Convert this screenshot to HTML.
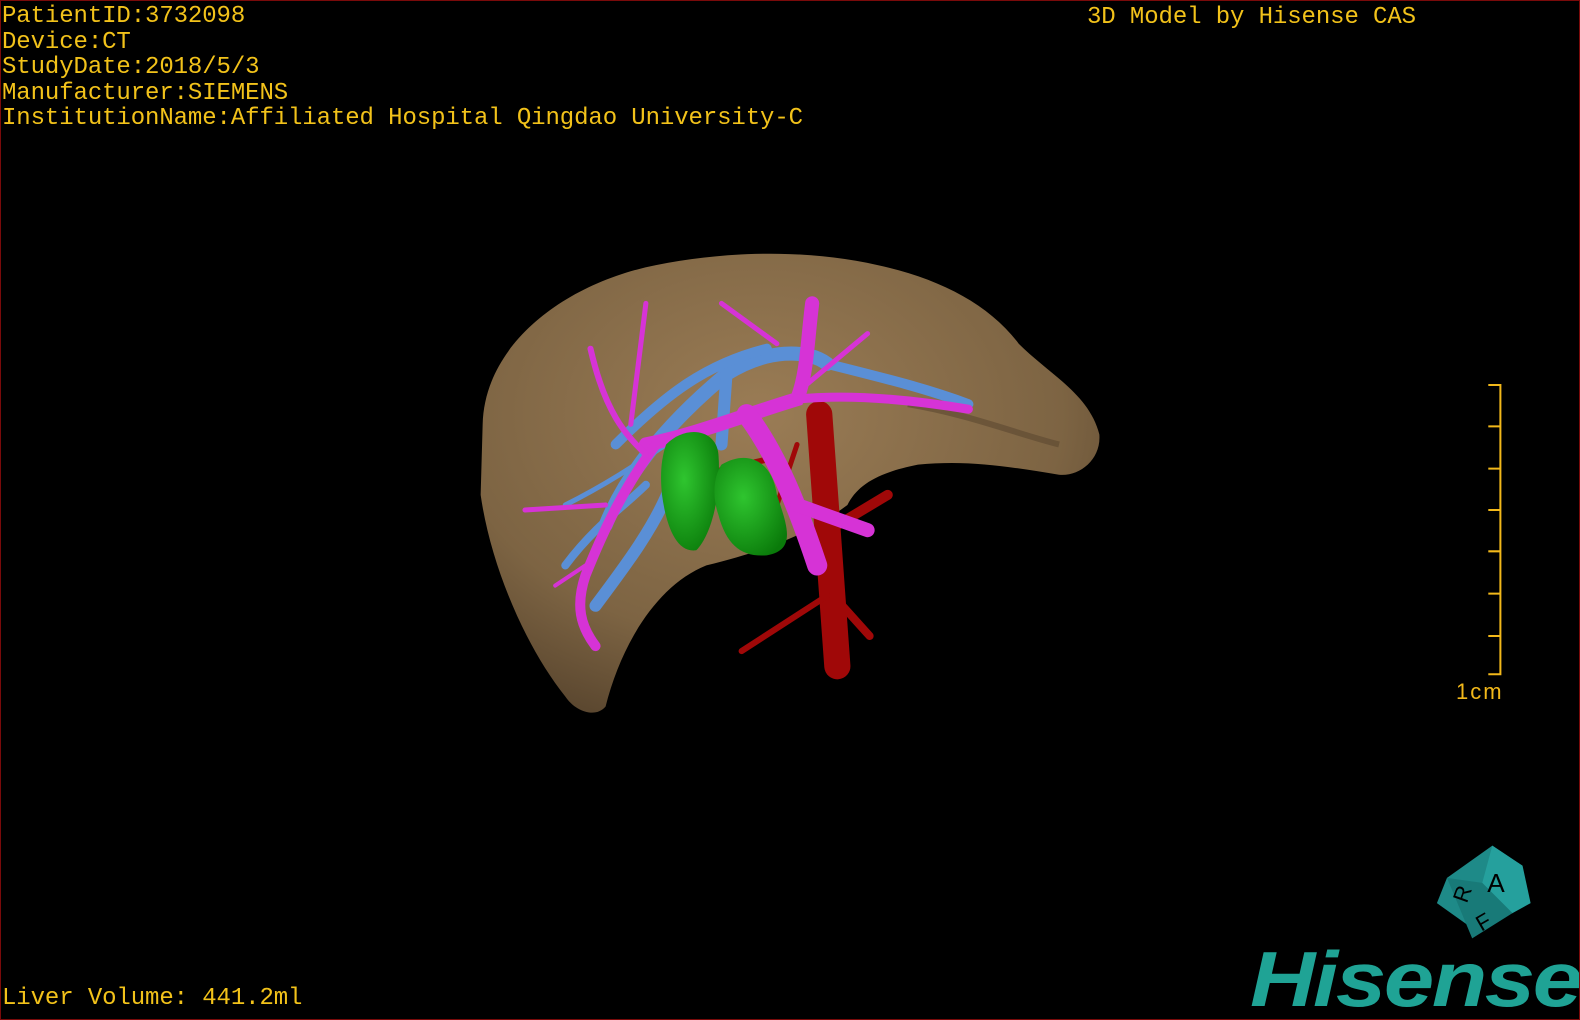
<!DOCTYPE html>
<html><head><meta charset="utf-8"><style>
html,body{margin:0;padding:0;background:#000;}
#root{position:relative;width:1580px;height:1020px;background:#000;overflow:hidden;box-sizing:border-box;border:1px solid #7a0a0a;}
.t{position:absolute;color:#f2c21a;font-family:"Liberation Mono",monospace;font-size:24px;line-height:25px;white-space:pre;letter-spacing:-0.1px;}
svg{position:absolute;left:0;top:0;}
</style></head><body><div id="root">
<svg width="1580" height="1020" viewBox="0 0 1568 1012" preserveAspectRatio="none">
<defs>
<radialGradient id="lg" cx="0.45" cy="0.35" r="0.7">
<stop offset="0" stop-color="#9a7c55"/><stop offset="0.7" stop-color="#7d6443"/><stop offset="1" stop-color="#5c4830"/>
</radialGradient>
<radialGradient id="gg" cx="0.4" cy="0.4" r="0.7"><stop offset="0" stop-color="#2fc52f"/><stop offset="1" stop-color="#0a7a0a"/></radialGradient>
</defs>
<path d="M478,420 C480,340 560,280 650,262 C720,248 800,246 870,262 C930,275 980,300 1010,340 C1040,370 1080,390 1090,430 C1092,455 1070,472 1050,470 C1000,462 960,455 910,460 C870,468 850,480 840,500 C800,530 760,545 700,560 C650,580 615,640 600,700 C590,712 570,705 560,690 C520,640 486,560 476,490 Z" fill="url(#lg)"/>
<path d="M900,400 C960,410 1010,430 1050,440" stroke="#5c4830" stroke-width="6" fill="none" opacity="0.6"/>
<g stroke="#a00808" fill="none" stroke-linecap="round">
<path d="M812,410 L830,660" stroke-width="26"/>
<path d="M820,590 L735,645" stroke-width="6"/>
<path d="M835,600 L862,630" stroke-width="8"/>
<path d="M830,520 L880,490" stroke-width="10"/>
<path d="M790,440 L770,500" stroke-width="5"/>
<path d="M715,465 L760,455" stroke-width="6"/>
</g>
<g stroke="#5a8fd6" fill="none" stroke-linecap="round">
<path d="M600,520 C620,470 660,420 720,370 C760,345 800,345 820,360" stroke-width="14"/>
<path d="M610,440 C660,390 700,360 760,345" stroke-width="10"/>
<path d="M720,370 L715,440" stroke-width="12"/>
<path d="M820,360 C880,375 920,385 960,400" stroke-width="10"/>
<path d="M590,600 C620,560 650,520 665,480" stroke-width="12"/>
<path d="M560,560 C590,520 620,500 640,480" stroke-width="8"/>
<path d="M560,500 C600,480 630,460 660,440" stroke-width="5"/>
</g>
<g stroke="#d633d6" fill="none" stroke-linecap="round">
<path d="M640,440 C690,430 740,410 790,395 C800,370 800,340 805,300" stroke-width="14"/>
<path d="M790,395 C840,390 900,395 960,405" stroke-width="9"/>
<path d="M770,340 L715,300" stroke-width="5"/>
<path d="M800,380 L860,330" stroke-width="5"/>
<path d="M650,440 C620,480 600,520 580,570 C570,600 575,620 590,640" stroke-width="10"/>
<path d="M640,450 C620,430 600,410 585,345" stroke-width="6"/>
<path d="M625,420 L640,300" stroke-width="5"/>
<path d="M600,500 L520,505" stroke-width="5"/>
<path d="M580,560 L550,580" stroke-width="4"/>
<path d="M740,410 C770,450 790,500 810,560" stroke-width="20"/>
<path d="M790,500 L860,525" stroke-width="14"/>
</g>
<path d="M660,440 C680,420 710,425 712,450 C715,490 705,530 690,545 C670,548 660,520 656,490 C654,470 655,455 660,440Z" fill="url(#gg)"/>
<path d="M715,460 C740,445 765,455 770,490 C780,520 790,545 760,550 C735,552 720,540 712,510 C705,490 708,470 715,460Z" fill="url(#gg)"/>
<g stroke="#f2b81a" stroke-width="2" fill="none">
<path d="M1476,381 H1488 V668 H1476"/>
<path d="M1476,422 H1488 M1476,464 H1488 M1476,505 H1488 M1476,546 H1488 M1476,588 H1488 M1476,630 H1488"/>
</g>
<polygon points="1435,870 1480,838 1510,858 1500,905 1460,920 1425,895" fill="#1e8a88"/>
<polygon points="1480,838 1510,858 1518,895 1500,905 1470,875" fill="#25a09d"/>
<polygon points="1435,870 1470,875 1500,905 1460,930" fill="#187a78"/>
<text x="1475" y="884" font-family="Liberation Sans,sans-serif" font-size="26" fill="#000">A</text>
<text x="1440" y="895" font-family="Liberation Sans,sans-serif" font-size="22" fill="#000" transform="rotate(-70 1448 885)">R</text>
<text x="1465" y="922" font-family="Liberation Sans,sans-serif" font-size="22" fill="#000" transform="rotate(-30 1470 915)">F</text>
</svg>
<div class="t" style="left:1px;top:3px">PatientID:3732098</div>
<div class="t" style="left:1px;top:29px">Device:CT</div>
<div class="t" style="left:1px;top:54px">StudyDate:2018/5/3</div>
<div class="t" style="left:1px;top:80px">Manufacturer:SIEMENS</div>
<div class="t" style="left:1px;top:105px">InstitutionName:Affiliated Hospital Qingdao University-C</div>
<div class="t" style="left:1086px;top:4px">3D Model by Hisense CAS</div>
<div class="t" style="left:1px;top:985px">Liver Volume: 441.2ml</div>
<div style="position:absolute;left:1455px;top:678px;color:#f2b81a;font-family:'Liberation Sans',sans-serif;font-size:22px;letter-spacing:2px">1cm</div>
<div style="position:absolute;left:1249px;top:938px;color:#1fa395;font-family:'Liberation Sans',sans-serif;font-weight:bold;font-style:italic;font-size:78px;line-height:80px;letter-spacing:-2px;transform:scaleX(1.16);transform-origin:0 0">Hisense</div>
</div></body></html>
